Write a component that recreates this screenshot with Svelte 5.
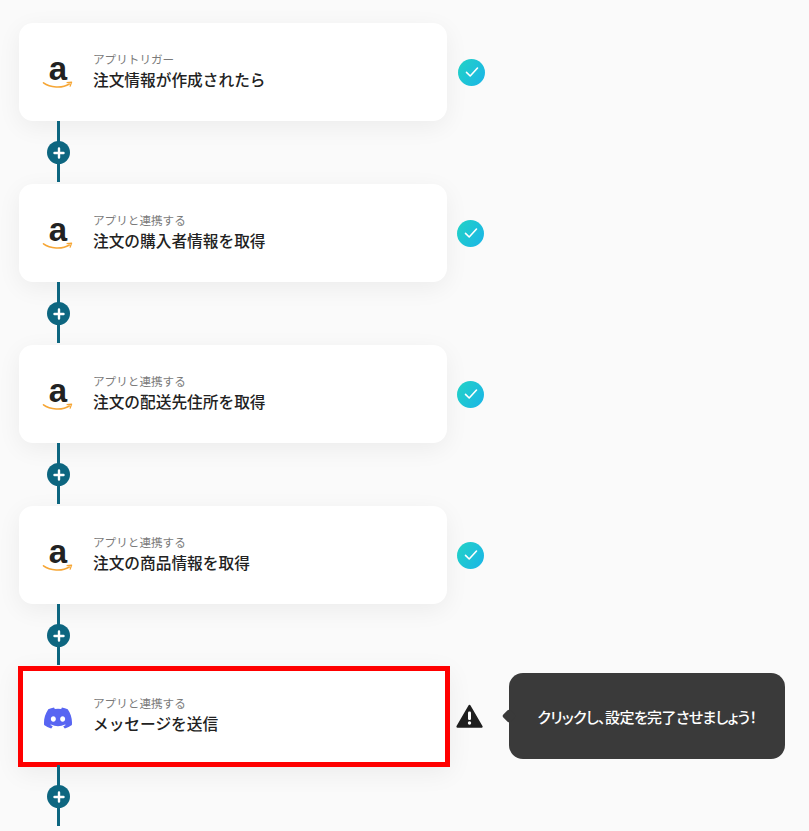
<script>
  const steps = [
    { app: 'amazon', label: 'アプリトリガー', title: '注文情報が作成されたら', status: 'done' },
    { app: 'amazon', label: 'アプリと連携する', title: '注文の購入者情報を取得', status: 'done' },
    { app: 'amazon', label: 'アプリと連携する', title: '注文の配送先住所を取得', status: 'done' },
    { app: 'amazon', label: 'アプリと連携する', title: '注文の商品情報を取得', status: 'done' },
    { app: 'discord', label: 'アプリと連携する', title: 'メッセージを送信', status: 'warning' }
  ];
</script>

<div class="flow">
  {#each steps as step, i}
    <div class="step">
      <div class="card" class:selected={step.status === 'warning'}>
        <div class="logo">
          {#if step.app === 'amazon'}
            <span class="amazon-a">a</span>
            <svg class="smile" width="32" height="10" viewBox="0 0 32 10" aria-hidden="true">
              <path d="M1.5 1.8C8 6.6 20 7.6 27.3 3" fill="none" stroke="#f6a635" stroke-width="1.6" stroke-linecap="round" />
              <path d="M24.6 1.6L29.6 1.1L28 5.6" fill="none" stroke="#f6a635" stroke-width="1.3" stroke-linejoin="round" />
            </svg>
          {:else}
            <svg width="28" height="22" viewBox="0 0 127.14 96.36" aria-hidden="true">
              <path fill="#5865f2" d="M107.7 8.07A105.15 105.15 0 0 0 81.47 0a72.06 72.06 0 0 0-3.36 6.83 97.68 97.68 0 0 0-29.11 0A72.37 72.37 0 0 0 45.64 0a105.89 105.89 0 0 0-26.25 8.09C2.79 32.65-1.71 56.6.54 80.21a105.73 105.73 0 0 0 32.17 16.15 77.7 77.7 0 0 0 6.89-11.11 68.42 68.42 0 0 1-10.85-5.18c.91-.66 1.8-1.34 2.66-2a75.57 75.57 0 0 0 64.32 0c.87.71 1.76 1.39 2.66 2a68.68 68.68 0 0 1-10.87 5.19 77 77 0 0 0 6.89 11.1 105.25 105.25 0 0 0 32.19-16.14c2.64-27.38-4.51-51.11-18.9-72.15ZM42.45 65.69C36.18 65.69 31 60 31 53s5-12.74 11.43-12.74S54 46 53.89 53s-5.05 12.69-11.44 12.69Zm42.24 0C78.41 65.69 73.25 60 73.25 53s5-12.74 11.44-12.74S96.23 46 96.12 53s-5.04 12.69-11.43 12.69Z" />
            </svg>
          {/if}
        </div>
        <div class="text">
          <div class="label">{step.label}</div>
          <div class="title">{step.title}</div>
        </div>
      </div>

      {#if step.status === 'done'}
        <div class="check" class:first={i === 0}>
          <svg width="14" height="12" viewBox="0 0 14 12" aria-hidden="true">
            <path d="M1.5 6.4L5.2 10L12.5 2" fill="none" stroke="#fff" stroke-width="1.6" stroke-linecap="round" stroke-linejoin="round" />
          </svg>
        </div>
      {:else}
        <svg class="warning" width="27" height="24" viewBox="0 0 27 24" aria-hidden="true">
          <path fill="#1f1f1f" stroke="#1f1f1f" stroke-width="2.4" stroke-linejoin="round" d="M13.5 2L25.4 22.6H1.6Z" />
          <rect x="12" y="7.5" width="3" height="8.5" rx="1.2" fill="#fff" />
          <circle cx="13.5" cy="19" r="1.7" fill="#fff" />
        </svg>
        <div class="tooltip">クリックし、設定を完了させましょう！</div>
      {/if}
    </div>

    <div class="connector">
      <button class="add" aria-label="追加">
        <svg width="12" height="12" viewBox="0 0 12 12" aria-hidden="true">
          <path d="M6 1.5V10.5M1.5 6H10.5" stroke="#fff" stroke-width="2.4" stroke-linecap="round" />
        </svg>
      </button>
    </div>
  {/each}
</div>

<style>
  :global(body) {
    background: #fafafa;
    overflow: hidden;
  }

  .flow {
    height: 831px;
    box-sizing: border-box;
    padding: 23px 0 0 19px;
    overflow: hidden;
    font-family: "Noto Sans CJK JP", "Noto Sans", sans-serif;
  }

  .step {
    display: flex;
    align-items: center;
    height: 98px;
  }

  .card {
    display: flex;
    align-items: center;
    box-sizing: border-box;
    flex: none;
    width: 428px;
    height: 98px;
    padding: 0 0 2px 23px;
    background: #fff;
    border-radius: 14px;
    box-shadow: 0 6px 24px rgba(0, 0, 0, 0.06);
  }

  .card.selected {
    width: 432px;
    height: 101px;
    margin: -1px -4px 0 -1px;
    padding: 0 0 2px 19px;
    border: 5px solid #ff0000;
    border-radius: 0;
    position: relative;
    top: 1px;
  }

  .logo {
    display: flex;
    flex-direction: column;
    align-items: center;
    justify-content: center;
    width: 32px;
    height: 40px;
    margin-right: 19px;
    position: relative;
    top: 2px;
  }

  .amazon-a {
    font-family: "Liberation Sans", Arial, sans-serif;
    font-size: 33px;
    font-weight: 700;
    line-height: 28px;
    color: #222;
  }

  .smile {
    margin-top: -2px;
  }

  .text {
    display: flex;
    flex-direction: column;
    gap: 1px;
  }

  .label {
    font-size: 11.6px;
    line-height: 16px;
    color: #7a7a7a;
  }

  .title {
    font-size: 15.7px;
    line-height: 24px;
    font-weight: 500;
    color: #222;
  }

  .check {
    display: flex;
    align-items: center;
    justify-content: center;
    flex: none;
    width: 27px;
    height: 27px;
    margin-left: 10px;
    border-radius: 50%;
    background: linear-gradient(120deg, #22d3c5, #1ab4e8);
  }

  .check.first {
    margin-left: 11px;
  }

  .warning {
    flex: none;
    margin-left: 10px;
  }

  .tooltip {
    position: relative;
    box-sizing: border-box;
    flex: none;
    display: flex;
    align-items: center;
    justify-content: center;
    width: 276px;
    height: 86px;
    margin-left: 26px;
    background: #3a3a3a;
    border-radius: 14px;
    color: #fff;
    font-size: 15px;
    font-weight: 500;
    letter-spacing: -0.6px;
    white-space: nowrap;
    font-feature-settings: "palt";
  }

  .tooltip::before {
    content: "";
    position: absolute;
    left: -5px;
    top: 38px;
    width: 10px;
    height: 10px;
    background: #3a3a3a;
    transform: rotate(45deg);
    border-radius: 2px;
  }

  .connector {
    display: flex;
    align-items: center;
    justify-content: center;
    position: relative;
    width: 23px;
    height: 63px;
    margin-left: 28px;
  }

  .connector::before {
    content: "";
    position: absolute;
    left: 10px;
    top: 0;
    bottom: 2px;
    width: 3px;
    background: #0d6680;
  }

  .add {
    position: relative;
    display: flex;
    align-items: center;
    justify-content: center;
    width: 23px;
    height: 23px;
    padding: 0;
    border: none;
    border-radius: 50%;
    background: #0d6680;
  }
</style>
